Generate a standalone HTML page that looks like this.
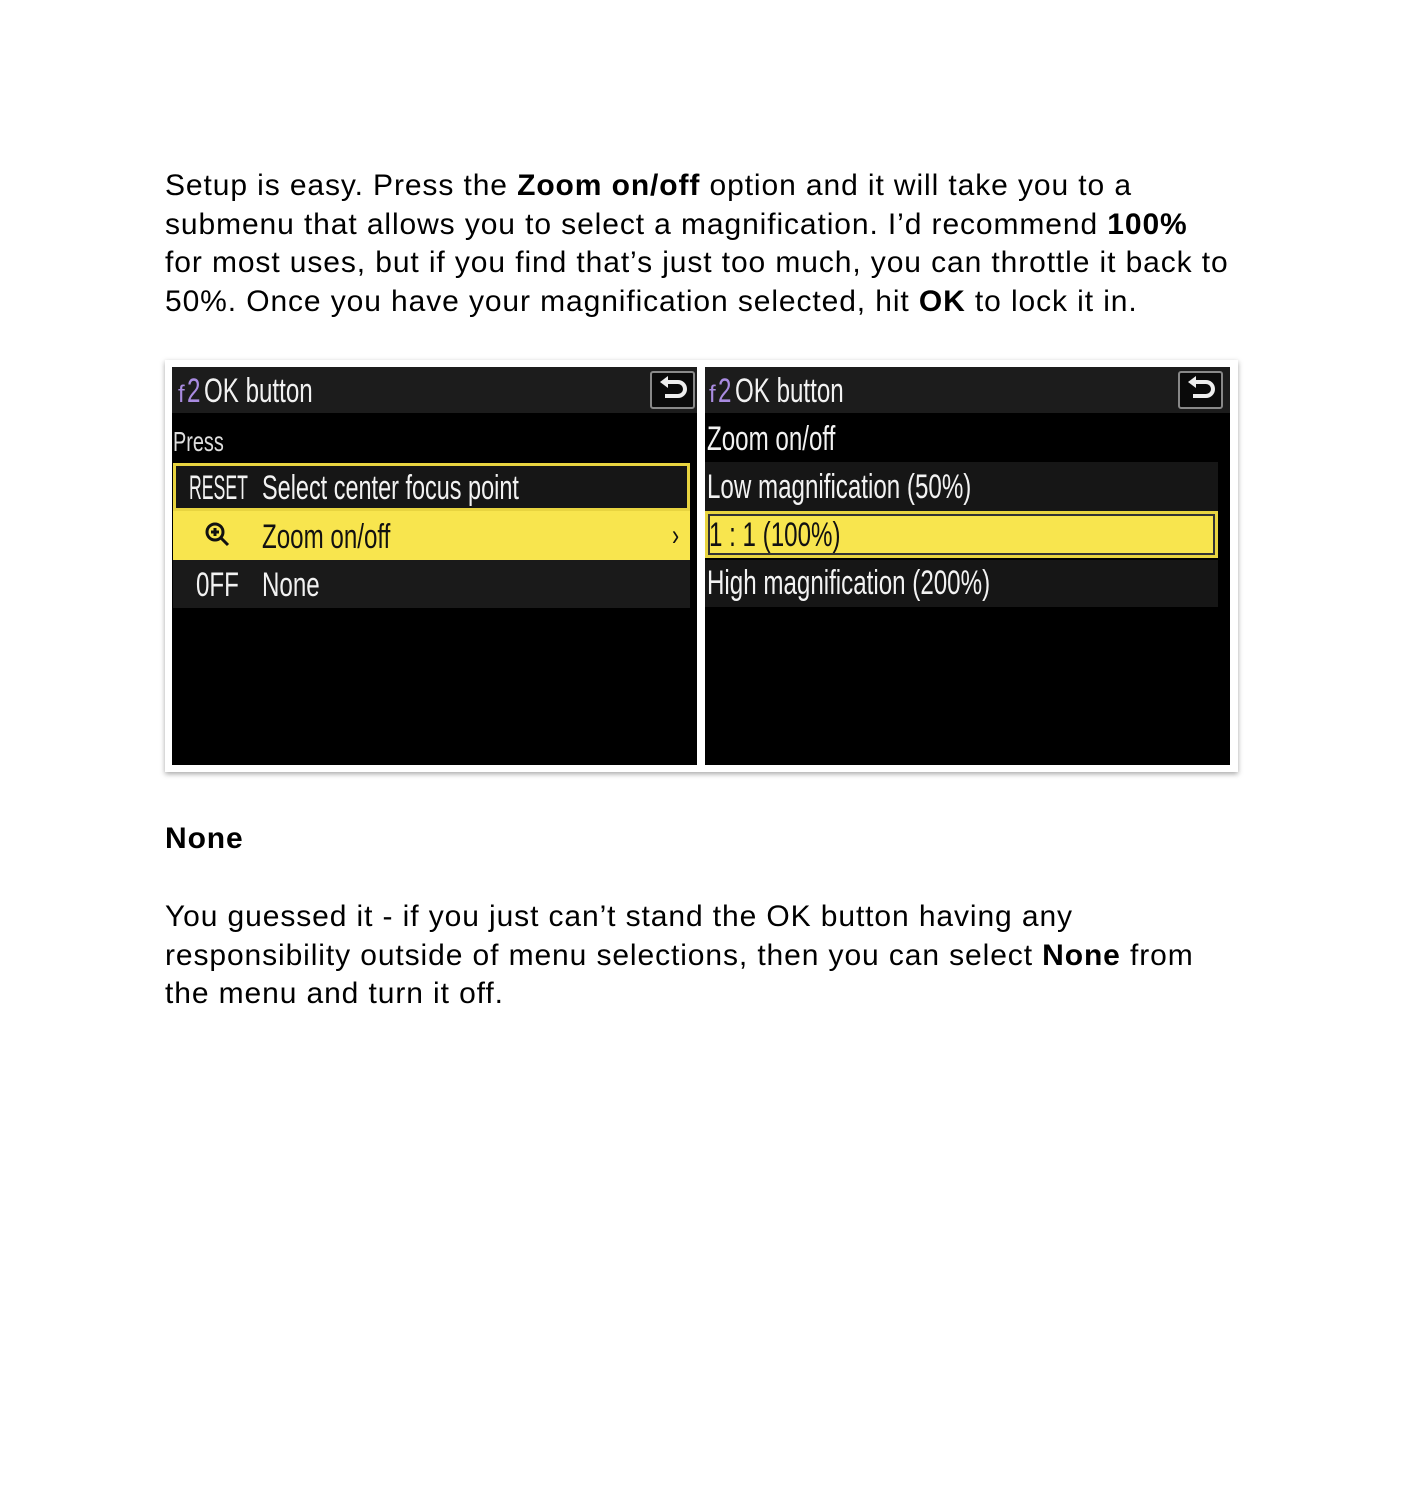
<!DOCTYPE html>
<html><head><meta charset="utf-8"><style>
*{margin:0;padding:0;box-sizing:border-box}
body{width:1403px;height:1507px;background:#fff;position:relative;overflow:hidden;font-family:"Liberation Sans",Arial,sans-serif;color:#000}
.p{position:absolute;left:165px;font-size:30px;letter-spacing:0.9px;line-height:38.7px;white-space:nowrap}
.frame{position:absolute;left:165px;top:360px;width:1073px;height:412px;background:#fff;box-shadow:0 2px 5px rgba(0,0,0,.35)}
.pan{position:absolute;top:7px;height:398px;width:525px;background:#000;overflow:hidden;font-family:"Liberation Sans",sans-serif;color:#f2f2f2}
.hd{position:absolute;left:0;top:0;width:100%;height:46px;background:#1c1c1c}
.t{position:absolute;font-size:34px;line-height:34px;white-space:nowrap;transform:scaleX(0.71);transform-origin:0 0}
.row{position:absolute;left:1px}
.back{position:absolute;top:4px;width:45px;height:38px;border:2px solid #888;border-radius:3px;background:#0a0a0a}
.f{position:absolute;color:#a98be0;white-space:nowrap}
</style></head><body>
<div class="p" style="top:167px">Setup is easy. Press the <b>Zoom on/off</b> option and it will take you to a<br>submenu that allows you to select a magnification. I’d recommend <b>100%</b><br>for most uses, but if you find that’s just too much, you can throttle it back to<br>50%. Once you have your magnification selected, hit <b>OK</b> to lock it in.</div>

<div class="frame">
 <div class="pan" style="left:7px">
  <div class="hd"></div>
  <div class="f" style="left:6px;top:16px;font-size:24px;line-height:24px">f</div>
  <div class="t" style="left:15px;top:7px;color:#a98be0">2</div>
  <div class="t" style="left:32px;top:7px">OK button</div>
  <div class="back" style="left:478px"><svg width="41" height="34" viewBox="0 0 41 34"><path d="M14 9h12a7 7 0 0 1 0 14H13" fill="none" stroke="#eee" stroke-width="4"/><path d="M8 9l8-6v12z" fill="#eee"/></svg></div>
  <div class="t" style="left:1px;top:58px;font-size:28px;color:#ddd">Press</div>
  <div class="row" style="top:96px;width:517px;height:48px;border:3px solid #e8d440;background:#161616"></div>
  <div class="t" style="left:17px;top:104px;transform:scaleX(0.52)">RESET</div>
  <div class="t" style="left:90px;top:104px;transform:scaleX(0.69)">Select center focus point</div>
  <div class="row" style="top:144px;width:517px;height:49px;background:#f8e54e"></div>
  <svg style="position:absolute;left:32px;top:154px" width="28" height="28" viewBox="0 0 28 28"><circle cx="11" cy="11" r="8" fill="none" stroke="#111" stroke-width="3"/><path d="M7 11h8M11 7v8M17 17l7 7" stroke="#111" stroke-width="3"/></svg>
  <div class="t" style="left:90px;top:153px;color:#111">Zoom on/off</div>
  <div class="t" style="left:500px;top:152px;color:#111;font-size:30px">›</div>
  <div class="row" style="top:193px;width:517px;height:48px;background:#1a1a1a"></div>
  <div class="t" style="left:24px;top:201px">0FF</div>
  <div class="t" style="left:90px;top:201px">None</div>
 </div>
 <div class="pan" style="left:540px">
  <div class="hd"></div>
  <div class="f" style="left:4px;top:16px;font-size:24px;line-height:24px">f</div>
  <div class="t" style="left:13px;top:7px;color:#a98be0">2</div>
  <div class="t" style="left:30px;top:7px">OK button</div>
  <div class="back" style="left:473px"><svg width="41" height="34" viewBox="0 0 41 34"><path d="M14 9h12a7 7 0 0 1 0 14H13" fill="none" stroke="#eee" stroke-width="4"/><path d="M8 9l8-6v12z" fill="#eee"/></svg></div>
  <div class="t" style="left:2px;top:55px">Zoom on/off</div>
  <div class="row" style="left:0;top:95px;width:513px;height:49px;background:#161616"></div>
  <div class="t" style="left:2px;top:103px">Low magnification (50%)</div>
  <div class="row" style="left:0;top:144px;width:513px;height:47px;background:#f8e54e;border:3px solid #e8d440;box-shadow:inset 0 0 0 2px #333"></div>
  <div class="t" style="left:4px;top:151px;color:#111">1 : 1 (100%)</div>
  <div class="row" style="left:0;top:193px;width:513px;height:47px;background:#161616"></div>
  <div class="t" style="left:2px;top:199px">High magnification (200%)</div>
 </div>
</div>

<div class="p" style="top:820px;font-weight:bold">None</div>
<div class="p" style="top:898px">You guessed it - if you just can’t stand the OK button having any<br>responsibility outside of menu selections, then you can select <b>None</b> from<br>the menu and turn it off.</div>
</body></html>
